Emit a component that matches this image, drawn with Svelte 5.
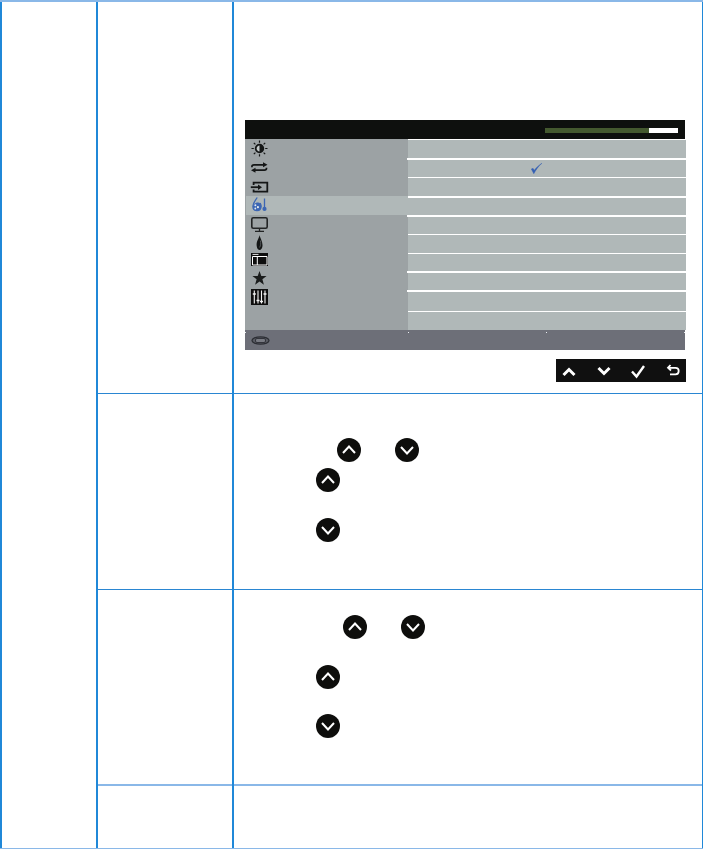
<script>
  // row heights of the grey settings list, measured off the screen
  const optionRows = [
    { h: 19, thick: false },
    { h: 19, thick: true, lead: true, checked: true },
    { h: 19, thick: false },
    { h: 19, thick: true },
    { h: 19, thick: true, lead: true },
    { h: 19, thick: false },
    { h: 18, thick: false },
    { h: 19, thick: true, lead: true },
    { h: 21, thick: true, lead: true },
    { h: 19, thick: false }
  ];
</script>

{#snippet round(up)}
  <svg class="round" viewBox="0 0 24 24">
    <circle cx="12" cy="12" r="12" fill="#0e0e0c" />
    {#if up}
      <path d="M6 15 12 8.500l6 6.500" fill="none" stroke="#fff" stroke-width="2" />
    {:else}
      <path d="M6 9 12 15.500l6-6.500" fill="none" stroke="#fff" stroke-width="2" />
    {/if}
  </svg>
{/snippet}

<div class="page">
  <div class="table">
    <div class="cell first">
      <div class="osd">
        <div class="osd-head">
          <div class="level"><span class="level-fill"></span></div>
        </div>
        <div class="osd-body">
          <ul class="menu">
            <li>
              <svg viewBox="0 0 18 19">
                <circle cx="9.500" cy="9.500" r="3.800" fill="#c4caca" stroke="#141616" stroke-width="1.800" />
                <path d="M9.500 9.500V5.700a3.800 3.800 0 0 1 0 7.600z" fill="#141616" />
                <path d="M9.500 1.500v2.300M9.500 15.200v2.300M1.500 9.500h2.300M15.200 9.500h2.300M3.800 3.800l1.600 1.600M13.600 13.600l1.600 1.600M3.800 15.200l1.600-1.600M13.600 5.400l1.600-1.600" stroke="#141616" stroke-width="1.200" />
              </svg>
            </li>
            <li>
              <svg viewBox="0 0 18 19">
                <path d="M1.900 9.300V8.700c0-1.200.8-1.900 2.100-1.900h10M16.500 9.700v.6c0 1.200-.8 1.900-2.100 1.900H4.500" fill="none" stroke="#141616" stroke-width="1.700" />
                <path d="M13 4.300 17.500 6.800 13 9.300zM5.500 9.700 1 12.200 5.500 14.700z" fill="#141616" />
              </svg>
            </li>
            <li>
              <svg viewBox="0 0 18 19">
                <path d="M3.600 8V5.700h13.700v9H3.600v-2.300" fill="none" stroke="#141616" stroke-width="1.800" />
                <path d="M.8 10.200h8" stroke="#141616" stroke-width="1.800" />
                <path d="M8 7.400 12 10.200 8 13z" fill="#141616" />
              </svg>
            </li>
            <li class="active">
              <svg viewBox="0 0 18 19">
                <path d="M7.200 1.500C5.500 4.500 2.900 7 2.900 10.300 2.900 13 4.700 14.700 7 14.700s4.100-1.700 4.100-4.400c0-1.300-.4-2.300-1-3.300" fill="none" stroke="#3c66b4" stroke-width="1.300" />
                <path d="M3 10.300C3.500 7.500 6 6.500 8 6.500s3.200 2 3.200 3.800c0 2.700-1.900 4.400-4.200 4.400s-4-1.700-4-4.400z" fill="#3c66b4" />
                <circle cx="5.400" cy="9.200" r="1" fill="#e4eaf0" />
                <circle cx="7.900" cy="11.200" r="1.100" fill="#e4eaf0" />
                <circle cx="5.300" cy="12.500" r="0.900" fill="#e4eaf0" />
                <path d="M14.500 2.500v9" stroke="#3c66b4" stroke-width="1.300" />
                <circle cx="14.500" cy="12.900" r="2.100" fill="#3c66b4" />
              </svg>
            </li>
            <li>
              <svg viewBox="0 0 18 19">
                <rect x="1.800" y="2.800" width="15.400" height="10.400" rx="1.500" fill="none" stroke="#222424" stroke-width="1.600" />
                <path d="M9.500 14v2.200M5 16.400h9" stroke="#222424" stroke-width="1.300" />
              </svg>
            </li>
            <li>
              <svg viewBox="0 0 18 19">
                <path d="M9.300.8C10 3 6.800 6 6.600 10.300c-.1 2.900 1 5.700 3 5.700 1.800 0 3-2.500 2.900-5C12.400 7.500 10.300 4 9.300.8z" fill="#141616" />
                <path d="M10.300 6.500C11 9 10.800 11.500 9.600 13.500" fill="none" stroke="#6c7072" stroke-width="0.700" />
              </svg>
            </li>
            <li>
              <svg viewBox="0 0 18 19">
                <rect x="1" y="0" width="17" height="13" fill="#0e0e0e" />
                <path d="M2.500 1.400h6" stroke="#fff" stroke-width="0.900" />
                <path d="M2.500 3.500h14.500v8.500H2.500zM7.300 3.500V12" fill="none" stroke="#fff" stroke-width="1" />
              </svg>
            </li>
            <li>
              <svg viewBox="0 0 18 19">
                <path d="M9.500-1 11.300 4 16.600 4.100 12.400 7.300 13.900 12.700 9.500 9.500 5.100 12.700 6.600 7.300 2.400 4.100 7.700 4z" fill="#1a1c1c" />
              </svg>
            </li>
            <li>
              <svg viewBox="0 0 18 19">
                <rect x="1" y="-2" width="17" height="16" fill="#0e0e0e" />
                <path d="M4.300-.5v13M8 -.5v13M11.500-.5v13M15-.5v13" stroke="#f4f4f4" stroke-width="1.100" />
                <path d="M2.800 3h3M6.500 9.500h3M10 10.500h3M13.500 3h3" stroke="#f4f4f4" stroke-width="1.600" />
              </svg>
            </li>
          </ul>
          <ul class="options">
            {#each optionRows as row}
              <li class:thick={row.thick} class:lead={row.lead} style="height: {row.h}px">
                {#if row.checked}
                  <svg class="tick" viewBox="0 0 11 11">
                    <path d="M.3 6 2.800 10.800C4.800 7 7.500 3 11 .2 7.500 2.300 5 4.800 3.300 7.300L2 5.300z" fill="#3460b4" stroke="#3460b4" stroke-width="0.400" />
                  </svg>
                {/if}
              </li>
            {/each}
          </ul>
        </div>
        <div class="osd-foot">
          <i class="dot d1"></i><i class="dot d2"></i><i class="dot d3"></i><i class="dot d4"></i>
          <svg class="port" viewBox="0 0 19 9">
            <ellipse cx="9.500" cy="4.500" rx="8.500" ry="3.600" fill="#5a5c64" stroke="#2c2e34" stroke-width="1.300" />
            <rect x="4.500" y="2.500" width="10" height="4" rx="1.500" fill="#787a82" stroke="#2c2e34" stroke-width="0.900" />
          </svg>
        </div>
      </div>
      <div class="keys">
        <svg viewBox="0 0 20 20"><path d="M4.500 14 10 8.500 15.500 14" fill="none" stroke="#fff" stroke-width="3" /></svg>
        <svg viewBox="0 0 20 20"><path d="M4.500 7 10 12.500 15.500 7" fill="none" stroke="#fff" stroke-width="3" /></svg>
        <svg viewBox="0 0 20 20"><path d="M4 10.500 8.500 15.500 16 5" fill="none" stroke="#fff" stroke-width="2.400" /></svg>
        <svg viewBox="0 0 20 20"><path d="M7.500 4 5 6.800 8 9.500M5 6.800h7.500c2 0 3.200 1.500 3.200 3.300s-1.200 3.300-3.200 3.300H7" fill="none" stroke="#fff" stroke-width="1.800" /></svg>
      </div>
    </div>

    <div class="cell second">
      <div class="pair">{@render round(true)}{@render round(false)}</div>
      <div class="single">{@render round(true)}</div>
      <div class="single lower">{@render round(false)}</div>
    </div>

    <div class="cell third">
      <div class="pair">{@render round(true)}{@render round(false)}</div>
      <div class="single">{@render round(true)}</div>
      <div class="single lower">{@render round(false)}</div>
    </div>

    <div class="cell fourth"></div>

    <div class="hline h1"></div>
    <div class="hline h2"></div>
    <div class="hline h3"></div>

    <div class="vline v1"></div>
    <div class="vline v2"></div>
    <div class="vline v3"></div>
    <div class="vline v4"></div>
  </div>
</div>

<style>
  :global(body) {
    margin: 0;
    background: #fff;
  }

  .page {
    width: 703px;
    height: 849px;
    overflow: hidden;
  }

  .table {
    display: grid;
    grid-template-columns: 2px 94px 2px 134px 2px 468px 1px;
    grid-template-rows: 391px 1px 195px 1px 194px 2px 62px;
    border-top: 2px solid #8ab8e8;
    border-bottom: 1px solid #8ab8e8;
  }

  .vline {
    grid-row: 1 / -1;
    background: #2088d8;
  }
  .v1 { grid-column: 1; }
  .v2 { grid-column: 3; }
  .v3 { grid-column: 5; }
  .v4 { grid-column: 7; }

  .hline {
    grid-column: 4 / -1;
    background: #2a86d2;
  }
  .h1 { grid-row: 2; }
  .h2 { grid-row: 4; }
  .h3 { grid-row: 6; background: #8ab8e8; }

  .cell {
    grid-column: 6;
    min-width: 0;
  }
  .first { grid-row: 1; padding: 118px 0 0 11px; }
  .second { grid-row: 3; padding-top: 44px; }
  .third { grid-row: 5; padding-top: 25px; }
  .fourth { grid-row: 7; }

  .osd {
    width: 440px;
  }

  .osd-head {
    height: 19px;
    background: #0e100e;
    position: relative;
  }

  .level {
    position: absolute;
    left: 300px;
    top: 8px;
    width: 133px;
    height: 5px;
    background: #fff;
  }
  .level-fill {
    display: block;
    width: 104px;
    height: 100%;
    background: #44592f;
  }

  .osd-body {
    display: flex;
    height: 191px;
  }

  .menu {
    width: 163px;
    margin: 0;
    padding: 0;
    list-style: none;
    background: #9ca2a4;
  }
  .menu li {
    height: 19px;
    margin-left: 1px;
    padding-left: 4px;
  }
  .menu li.active {
    background: #b0b8b8;
  }
  .menu svg {
    display: block;
    width: 18px;
    height: 19px;
    overflow: visible;
  }

  .options {
    width: 278px;
    margin: 0 -1px 0 0;
    padding: 0;
    list-style: none;
    background: #b0b8b8;
  }
  .options li {
    box-sizing: border-box;
    position: relative;
    border-top: 1px solid #fff;
  }
  .options li.thick {
    border-top-width: 2px;
  }
  .options li.lead {
    margin-left: -1px;
  }

  .tick {
    position: absolute;
    left: 123px;
    top: 3px;
    width: 11px;
    height: 11px;
  }
  .lead .tick {
    left: 124px;
  }

  .osd-foot {
    height: 20px;
    background: #6d6f78;
    position: relative;
  }
  .dot {
    position: absolute;
    top: 2px;
    width: 1px;
    height: 1px;
    background: #e8ecef;
  }
  .d1 { left: 0; }
  .d2 { left: 163px; }
  .d3 { left: 301px; }
  .d4 { left: 439px; }

  .port {
    position: absolute;
    left: 6px;
    top: 6px;
    width: 19px;
    height: 9px;
  }

  .keys {
    box-sizing: border-box;
    width: 130px;
    height: 23px;
    margin: 9px 0 0 311px;
    padding: 0 3px;
    display: flex;
    justify-content: space-between;
    align-items: center;
    background: #101010;
  }
  .keys svg {
    width: 20px;
    height: 20px;
  }

  .round {
    display: block;
    width: 24px;
    height: 24px;
  }

  .pair {
    display: flex;
    gap: 34px;
  }
  .second .pair { padding-left: 103px; }
  .third .pair { padding-left: 109px; }

  .single {
    padding-left: 82px;
  }
  .second .single { margin-top: 6px; }
  .second .lower { margin-top: 26px; }
  .third .single { margin-top: 26px; }
  .third .lower { margin-top: 25px; }
</style>
